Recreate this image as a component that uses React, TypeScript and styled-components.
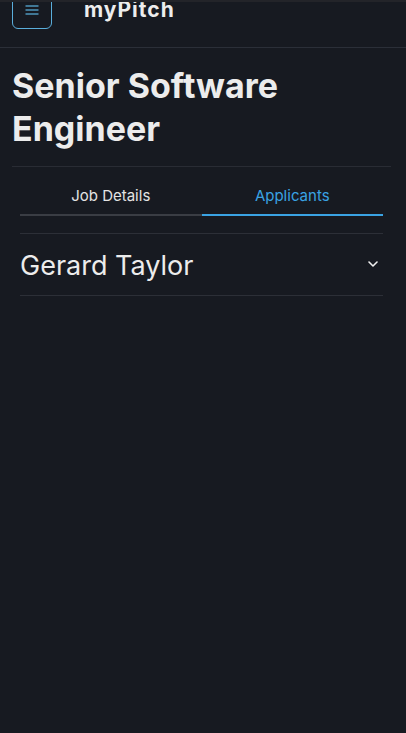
import React, { useState } from "react";
import styled, { createGlobalStyle } from "styled-components";

const GlobalStyle = createGlobalStyle`
  html, body {
    margin: 0;
    padding: 0;
    background: #171a21;
  }
  body {
    font-family: Inter, "Noto Sans", "Liberation Sans", sans-serif;
    color: #ececec;
    -webkit-font-smoothing: antialiased;
  }
  * { box-sizing: border-box; }
`;

const Page = styled.div`
  min-height: 733px;
  background: #171a21;
`;

const Header = styled.header`
  height: 48px;
  display: flex;
  align-items: flex-start;
  gap: 32px;
  padding-left: 12px;
  overflow: hidden;
  border-top: 2px solid #232429;
  border-bottom: 1px solid #2b2f38;
`;

const MenuButton = styled.button`
  width: 40px;
  height: 38px;
  margin-top: -11px;
  display: flex;
  align-items: center;
  justify-content: center;
  background: transparent;
  border: 1px solid #5aaedb;
  border-radius: 6px;
  padding: 0;
  color: #4b8fb3;
`;

const Brand = styled.div`
  font-size: 21px;
  font-weight: 700;
  line-height: 20px;
  margin-top: -2px;
  color: #ededed;
  letter-spacing: 1px;
`;

const Main = styled.main`
  padding: 0 15px 0 12px;
`;

const Title = styled.h1`
  margin: 16px 0 0;
  font-size: 34px;
  line-height: 43px;
  font-weight: 700;
  color: #ececec;
  padding-bottom: 16px;
  border-bottom: 1px solid #292c34;
`;

const Section = styled.section`
  padding: 0 8px;
`;

const TabList = styled.div`
  margin-top: 9px;
  display: grid;
  grid-template-columns: 1fr 1fr;
`;

const Tab = styled.button<{ $active?: boolean }>`
  height: 40px;
  display: flex;
  align-items: center;
  justify-content: center;
  background: transparent;
  border: none;
  border-bottom: 2px solid ${(p) => (p.$active ? "#3aa3e3" : "#3a3d44")};
  color: ${(p) => (p.$active ? "#3aa3e3" : "#e4e4e4")};
  font-family: inherit;
  font-size: 15px;
  padding: 0;
  cursor: pointer;
`;

const Applicants = styled.div`
  margin-top: 17px;
  border-top: 1px solid #2c2f37;
`;

const Row = styled.div`
  height: 62px;
  display: flex;
  align-items: center;
  justify-content: space-between;
  padding: 0 5px 0 0;
  border-bottom: 1px solid #2c2f37;
`;

const Name = styled.span`
  font-size: 27px;
  font-weight: 400;
  color: #ececec;
  padding-top: 1px;
`;

const Chevron = styled.svg`
  width: 10px;
  height: 6px;
  margin-top: -1px;
`;

export default function App() {
  const [tab, setTab] = useState(1);
  return (
    <Page>
      <GlobalStyle />
      <Header>
        <MenuButton aria-label="menu">
          <svg width="14" height="10" viewBox="0 0 14 10">
            <g stroke="currentColor" strokeWidth="1.6">
              <line x1="0.5" y1="1" x2="13.5" y2="1" />
              <line x1="0.5" y1="5" x2="13.5" y2="5" />
              <line x1="0.5" y1="9" x2="13.5" y2="9" />
            </g>
          </svg>
        </MenuButton>
        <Brand>myPitch</Brand>
      </Header>
      <Main>
        <Title>Senior Software Engineer</Title>
        <Section>
          <TabList>
            <Tab $active={tab === 0} onClick={() => setTab(0)}>
              Job Details
            </Tab>
            <Tab $active={tab === 1} onClick={() => setTab(1)}>
              Applicants
            </Tab>
          </TabList>
          <Applicants>
            <Row>
              <Name>Gerard Taylor</Name>
              <Chevron viewBox="0 0 10 6">
                <polyline
                  points="1,1 5,5 9,1"
                  fill="none"
                  stroke="#f0f0f0"
                  strokeWidth="1.6"
                  strokeLinecap="round"
                  strokeLinejoin="round"
                />
              </Chevron>
            </Row>
          </Applicants>
        </Section>
      </Main>
    </Page>
  );
}
